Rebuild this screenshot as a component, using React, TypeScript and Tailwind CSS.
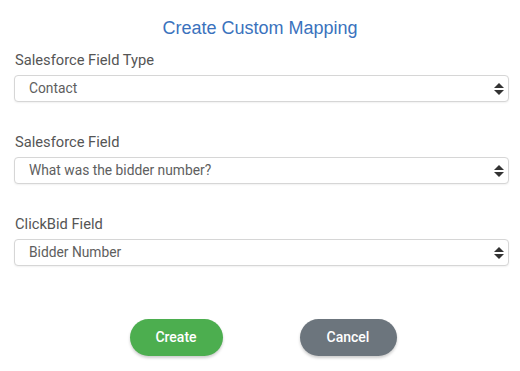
import { useState } from "react";

type FieldProps = {
  label: string;
  value: string;
  options: string[];
  onChange: (v: string) => void;
  className?: string;
};

function SortArrows() {
  return (
    <svg
      width="10"
      height="13"
      viewBox="0 0 10 13"
      className="pointer-events-none absolute right-[5px] top-1/2 -translate-y-1/2"
    >
      <path d="M0 5.5 L5 0.5 L10 5.5 Z" fill="#333" />
      <path d="M0 7.5 L5 12.5 L10 7.5 Z" fill="#333" />
    </svg>
  );
}

function SelectField({ label, value, options, onChange, className }: FieldProps) {
  return (
    <div className={className}>
      <label className="block text-[14.7px] leading-[20px] text-[#555] mb-[5px] pl-px">
        {label}
      </label>
      <div className="relative">
        <select
          value={value}
          onChange={(e) => onChange(e.target.value)}
          className="appearance-none w-full h-[27px] rounded-[4px] border border-[#d6d6d6] bg-white pl-[14px] pr-6 text-[13.8px] text-[#5e5e5e] shadow-[0_1px_2px_rgba(0,0,0,0.06)] outline-none"
        >
          {options.map((o) => (
            <option key={o}>{o}</option>
          ))}
        </select>
        <SortArrows />
      </div>
    </div>
  );
}

export default function App() {
  const [fieldType, setfieldType] = useState("Contact");
  const [sfField, setsfField] = useState("What was the bidder number?");
  const [cbField, setcbField] = useState("Bidder Number");

  return (
    <div className="w-[520px] h-[371px] bg-white pl-[14px] pr-[11px] pt-[16px] font-['Roboto',sans-serif]">
      <h2 className="text-center text-[18px] leading-[24px] text-[#3a72bd] font-['Liberation_Sans',sans-serif] mb-[10px] pr-[3px]">
        Create Custom Mapping
      </h2>

      <SelectField
        label="Salesforce Field Type"
        value={fieldType}
        options={["Contact", "Account", "Opportunity"]}
        onChange={setfieldType}
        className="mb-[30px]"
      />
      <SelectField
        label="Salesforce Field"
        value={sfField}
        options={["What was the bidder number?", "Email", "Phone"]}
        onChange={setsfField}
        className="mb-[30px]"
      />
      <SelectField
        label="ClickBid Field"
        value={cbField}
        options={["Bidder Number", "First Name", "Last Name"]}
        onChange={setcbField}
      />

      <div className="flex justify-center gap-[77px] mt-[53px] pl-[3px]">
        <button className="w-[93px] h-[37px] rounded-full bg-[#4cae4f] text-white text-[14px] font-medium shadow-[0_2px_3px_rgba(0,0,0,0.2)]">
          Create
        </button>
        <button className="w-[97px] h-[37px] rounded-full bg-[#6c757d] text-white text-[14px] font-medium shadow-[0_2px_3px_rgba(0,0,0,0.2)]">
          Cancel
        </button>
      </div>
    </div>
  );
}
